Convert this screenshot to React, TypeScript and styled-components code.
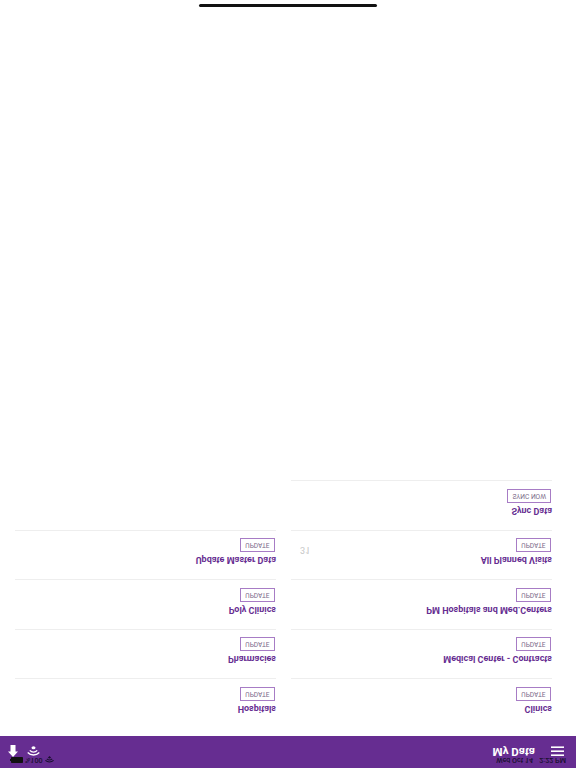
import React from "react";
import styled, { createGlobalStyle } from "styled-components";

const Global = createGlobalStyle`
  html, body { margin: 0; padding: 0; background: #fff; }
  * { box-sizing: border-box; }
`;

const Page = styled.div`
  width: 576px;
  height: 768px;
  display: flex;
  flex-direction: column;
  background: #fff;
  overflow: hidden;
  position: relative;
  transform: scaleY(-1);
  direction: rtl;
  font-family: Roboto, "Liberation Sans", Arial, sans-serif;
`;

const Header = styled.header`
  height: 32px;
  background: #662d91;
  display: flex;
  flex-shrink: 0;
  flex-direction: column;
  color: #fff;
`;

const StatusBar = styled.div`
  height: 5px;
  padding: 4px 10px 0 10px;
  display: flex;
  justify-content: space-between;
  align-items: flex-start;
  font-size: 7.2px;
  font-weight: 500;
  line-height: 8px;
  color: #1a1030;
`;

const StatusGroup = styled.div<{ $gap: number }>`
  display: flex;
  align-items: center;
  height: 8px;
  gap: ${(p) => p.$gap}px;
`;

const StatusText = styled.span`
  direction: ltr;
  white-space: nowrap;
`;

const ToolRow = styled.div`
  height: 23px;
  padding: 0 12px 0 8px;
  display: flex;
  justify-content: space-between;
  align-items: center;
`;

const ToolStart = styled.div`
  display: flex;
  align-items: center;
  gap: 9px;
`;

const ToolEnd = styled.div`
  display: flex;
  align-items: center;
  gap: 16px;
`;

const ScreenTitle = styled.span`
  font-size: 11.5px;
  font-weight: 700;
  line-height: 9px;
  color: #fff;
  direction: ltr;
`;

const Grid = styled.main`
  flex: 1;
  display: grid;
  grid-template-columns: 261px 261px;
  column-gap: 15px;
  padding: 8px 24px 0 15px;
  align-content: start;
`;

const Column = styled.section`
  display: flex;
  flex-direction: column;
`;

const Row = styled.div`
  height: 49.5px;
  border-bottom: 1px solid #eeeeee;
  display: flex;
  justify-content: space-between;
  align-items: flex-start;
  padding-top: 13px;
`;

const RowMain = styled.div`
  display: flex;
  flex-direction: column;
  align-items: flex-start;
`;

const RowTitle = styled.div`
  font-size: 9px;
  font-weight: 700;
  line-height: 12px;
  color: #662d91;
  direction: ltr;
  white-space: nowrap;
`;

const ActionButton = styled.button`
  height: 14px;
  min-width: 35px;
  margin: 2px 1px 0 0;
  padding: 0 4px;
  border: 1px solid #a77cc5;
  background: #fff;
  color: #7a6a88;
  font: 400 6.6px/12px Roboto, "Liberation Sans", sans-serif;
  text-transform: uppercase;
  direction: ltr;
  border-radius: 0;
`;

const RowValue = styled.span`
  font-size: 9px;
  line-height: 12px;
  color: #c4c4c4;
  margin: 10px 0 0 9px;
  letter-spacing: 0.3px;
  direction: ltr;
`;

const HomeBar = styled.div`
  position: absolute;
  left: 199px;
  bottom: 4px;
  width: 178px;
  height: 3px;
  border-radius: 2px;
  background: #111;
`;

const Battery = () => (
  <svg width="13" height="6" viewBox="0 0 13 6">
    <rect x="1" y="0" width="12" height="6" rx="0.8" fill="#111" />
    <rect x="0" y="2" width="1" height="2" fill="#111" />
  </svg>
);

const StatusWifi = () => (
  <svg width="9" height="7" viewBox="0 0 9 7">
    <path d="M4.5 7 L2.9 5.3 A2.4 2.4 0 0 1 6.1 5.3 Z" fill="#1a1030" />
    <path d="M1.8 4.2 A4 4 0 0 1 7.2 4.2" fill="none" stroke="#1a1030" strokeWidth="1.1" />
    <path d="M0.4 2.6 A6 6 0 0 1 8.6 2.6" fill="none" stroke="#1a1030" strokeWidth="1.1" />
  </svg>
);

const Menu = () => (
  <svg width="13" height="10" viewBox="0 0 13 10" fill="#fff">
    <rect y="0" width="13" height="1.6" />
    <rect y="4" width="13" height="1.6" />
    <rect y="8" width="13" height="1.6" />
  </svg>
);

const Broadcast = () => (
  <svg width="13" height="11" viewBox="0 0 13 11" fill="none" stroke="#fff" strokeWidth="1.3">
    <path d="M0.7 4.5 A 8 8 0 0 1 12.3 4.5" />
    <path d="M2.8 6.6 A 5 5 0 0 1 10.2 6.6" />
    <ellipse cx="6.5" cy="9.2" rx="2" ry="1.5" fill="#fff" stroke="none" />
  </svg>
);

const Download = () => (
  <svg width="10" height="12" viewBox="0 0 10 12" fill="#fff">
    <path d="M5 0 L10 5.5 L7.5 5.5 L7.5 12 L2.5 12 L2.5 5.5 L0 5.5 Z" />
  </svg>
);

type Item = { title: string; action?: string; value?: string };

const rightItems: Item[] = [
  { title: "Clinics" },
  { title: "Medical Center - Contracts" },
  { title: "PM Hospitals and Med.Centers" },
  { title: "All Planned Visits", value: "31" },
  { title: "Sync Data", action: "Sync Now" },
];

const leftItems: Item[] = [
  { title: "Hospitals" },
  { title: "Pharmacies" },
  { title: "Poly Clinics" },
  { title: "Update Master Data" },
];

const DataRow = ({ title, action = "Update", value }: Item) => (
  <Row>
    <RowMain>
      <RowTitle>{title}</RowTitle>
      <ActionButton>{action}</ActionButton>
    </RowMain>
    {value && <RowValue>{value}</RowValue>}
  </Row>
);

export default function App() {
  return (
    <>
      <Global />
      <Page>
        <Header>
          <StatusBar>
            <StatusGroup $gap={6}>
              <StatusText>2:22 PM</StatusText>
              <StatusText>Wed Oct 14</StatusText>
            </StatusGroup>
            <StatusGroup $gap={2}>
              <StatusWifi />
              <StatusText>%100</StatusText>
              <Battery />
            </StatusGroup>
          </StatusBar>
          <ToolRow>
            <ToolEnd>
              <Menu />
              <ScreenTitle>My Data</ScreenTitle>
            </ToolEnd>
            <ToolStart>
              <Broadcast />
              <Download />
            </ToolStart>
          </ToolRow>
        </Header>
        <Grid>
          <Column>
            {rightItems.map((item) => (
              <DataRow key={item.title} {...item} />
            ))}
          </Column>
          <Column>
            {leftItems.map((item) => (
              <DataRow key={item.title} {...item} />
            ))}
          </Column>
        </Grid>
        <HomeBar />
      </Page>
    </>
  );
}
